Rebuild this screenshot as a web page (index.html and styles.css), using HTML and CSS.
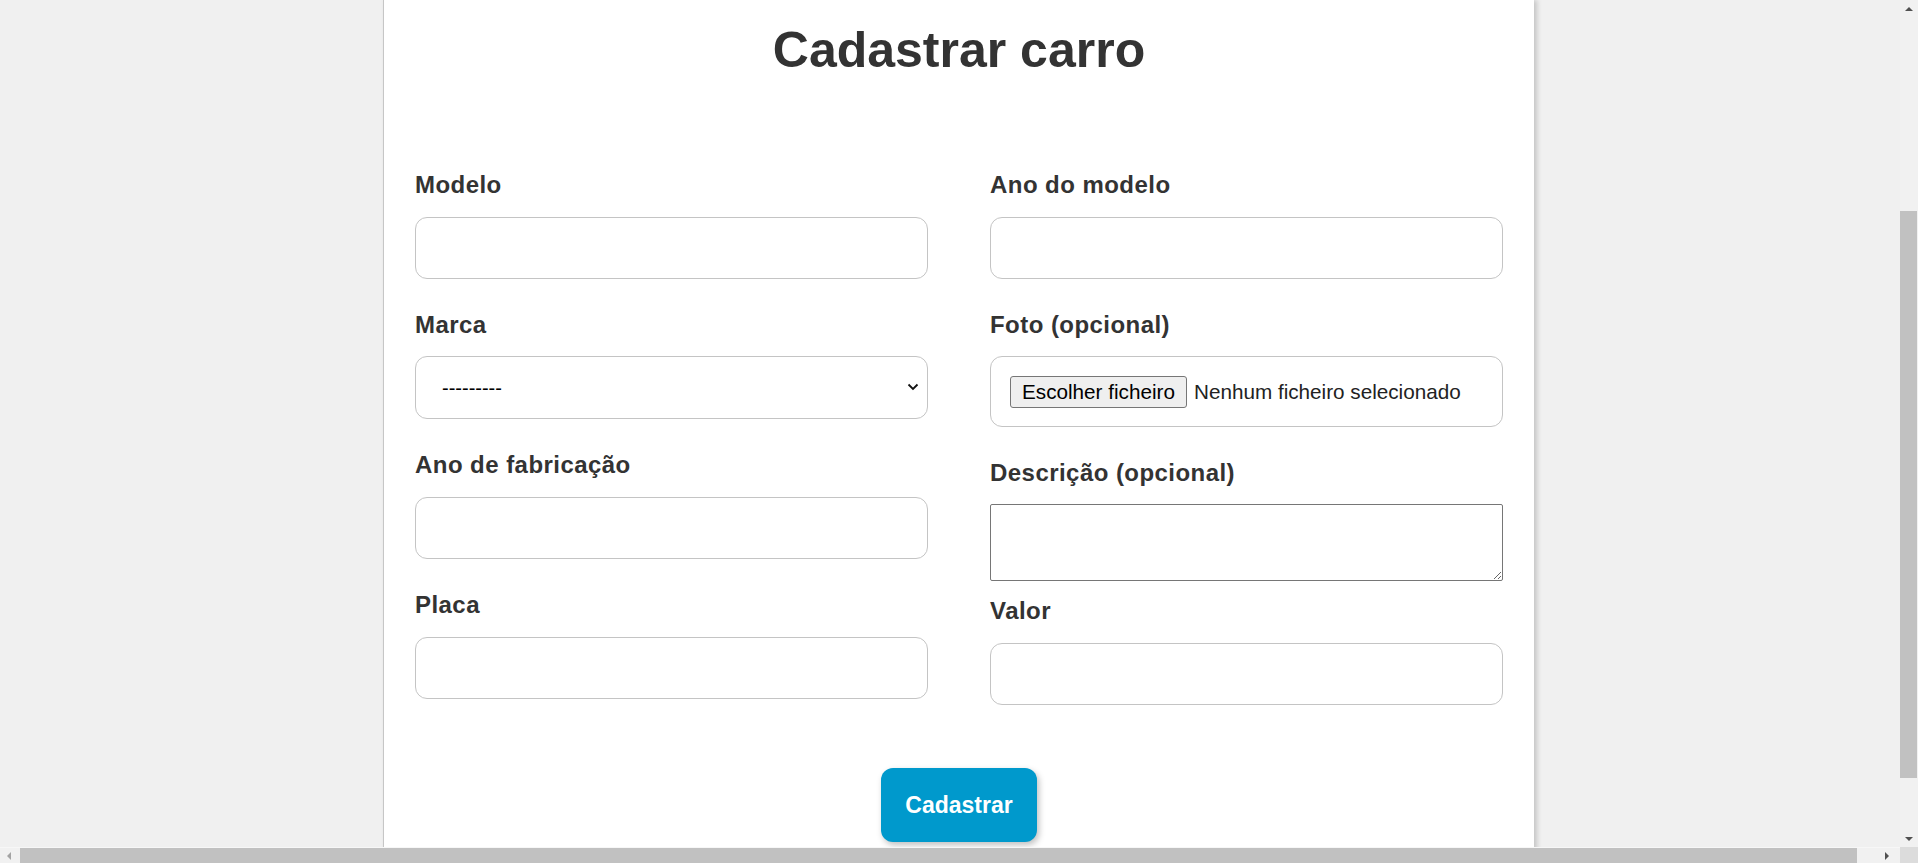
FILE: index.html
```html
<!DOCTYPE html>
<html lang="pt">
<head>
<meta charset="utf-8">
<title>Cadastrar carro</title>
<link rel="stylesheet" href="styles.css">
</head>
<body>
<div class="viewport">
  <main class="card">
    <h1 class="title">Cadastrar carro</h1>
    <form class="form">
      <div class="columns">
        <div class="col">
          <div class="field">
            <label class="label" for="modelo">Modelo</label>
            <input class="input" id="modelo" type="text">
          </div>
          <div class="field">
            <label class="label" for="marca">Marca</label>
            <div class="select-wrap">
              <select class="input select" id="marca">
                <option>---------</option>
              </select>
              <svg class="chevron" width="12" height="8" viewBox="0 0 12 8"><path d="M1.5 1.5 L6 6 L10.5 1.5" fill="none" stroke="#111" stroke-width="1.8"/></svg>
            </div>
          </div>
          <div class="field">
            <label class="label" for="anofab">Ano de fabricação</label>
            <input class="input" id="anofab" type="text">
          </div>
          <div class="field">
            <label class="label" for="placa">Placa</label>
            <input class="input" id="placa" type="text">
          </div>
        </div>
        <div class="col">
          <div class="field">
            <label class="label" for="anomod">Ano do modelo</label>
            <input class="input" id="anomod" type="text">
          </div>
          <div class="field">
            <span class="label">Foto (opcional)</span>
            <div class="file-box">
              <span class="file-btn">Escolher ficheiro</span>
              <span class="file-name">Nenhum ficheiro selecionado</span>
            </div>
          </div>
          <div class="field field-tight">
            <label class="label" for="desc">Descrição (opcional)</label>
            <textarea class="textarea" id="desc"></textarea>
          </div>
          <div class="field">
            <label class="label" for="valor">Valor</label>
            <input class="input" id="valor" type="text">
          </div>
        </div>
      </div>
      <div class="actions">
        <button class="submit" type="button">Cadastrar</button>
      </div>
    </form>
  </main>
</div>
<div class="vscroll">
  <div class="sb-btn"><span class="arrow-up"></span></div>
  <div class="vtrack"><div class="vthumb"></div></div>
  <div class="sb-btn"><span class="arrow-down"></span></div>
</div>
<div class="hscroll">
  <div class="sb-hbtn"><span class="arrow-left"></span></div>
  <div class="htrack"><div class="hthumb"></div></div>
  <div class="sb-hbtn sb-hbtn-right"><span class="arrow-right"></span></div>
</div>
<div class="corner"></div>
</body>
</html>
```

FILE: styles.css
```css
* { box-sizing: border-box; }

html, body {
  margin: 0;
  height: 100%;
}

body {
  display: grid;
  grid-template-columns: 1fr 18px;
  grid-template-rows: 1fr 16px;
  height: 863px;
  overflow: hidden;
  font-family: "Liberation Sans", Arial, Helvetica, sans-serif;
  color: #333;
  background: #f0f0f0;
}

.viewport {
  overflow: hidden;
  background: #f0f0f0;
}

.card {
  width: 1151px;
  min-height: 940px;
  margin-left: 383px;
  background: #fff;
  border-left: 1px solid #c6c6c6;
  box-shadow: 3px 0 5px rgba(0, 0, 0, 0.18);
  padding: 21px 31px 0 31px;
}

.title {
  margin: 0;
  text-align: center;
  font-size: 50px;
  line-height: 58px;
  font-weight: 700;
  color: #333;
}

.form {
  margin-top: 92px;
}

.columns {
  display: grid;
  grid-template-columns: 513px 513px;
  column-gap: 62px;
  align-items: start;
}

.col {
  display: flex;
  flex-direction: column;
}

.field {
  display: flex;
  flex-direction: column;
  margin-bottom: 32px;
}

.field-tight {
  margin-bottom: 16px;
}

.label {
  display: block;
  font-size: 24px;
  line-height: 28px;
  font-weight: 700;
  letter-spacing: 0.45px;
  margin-bottom: 18px;
  color: #333;
}

.input {
  display: block;
  width: 100%;
  height: 62px;
  border: 1px solid #c4c4c4;
  border-radius: 12px;
  background: #fff;
  font-family: "Liberation Sans", Arial, sans-serif;
  font-size: 20px;
  color: #000;
  padding: 0 18px;
  outline: none;
}

.select-wrap {
  position: relative;
}

.select {
  appearance: none;
  -webkit-appearance: none;
  height: 63px;
  margin-top: -1px;
  padding: 0 40px 0 26px;
  color: #000;
}

.chevron {
  position: absolute;
  right: 9px;
  top: 26px;
  pointer-events: none;
}

.file-box {
  display: flex;
  align-items: center;
  height: 71px;
  margin-top: -1px;
  border: 1px solid #c4c4c4;
  border-radius: 12px;
  padding: 0 19px;
  gap: 7px;
  font-size: 20.7px;
}

.file-btn {
  display: flex;
  align-items: center;
  height: 32px;
  padding: 0 11px;
  background: #efefef;
  border: 1px solid #767676;
  border-radius: 3px;
  color: #000;
  white-space: nowrap;
}

.file-name {
  color: #222;
  white-space: nowrap;
}

.textarea {
  display: block;
  width: 100%;
  height: 77px;
  margin-top: -1px;
  border: 1px solid #767676;
  border-radius: 2px;
  font-family: "Liberation Sans", Arial, sans-serif;
  font-size: 16px;
  resize: both;
  outline: none;
}

.actions {
  display: flex;
  justify-content: center;
  margin-top: 31px;
}

.submit {
  width: 156px;
  height: 74px;
  border: none;
  border-radius: 12px;
  background: #0099cc;
  color: #fff;
  font-family: "Liberation Sans", Arial, sans-serif;
  font-size: 23px;
  font-weight: 700;
  box-shadow: 2px 3px 6px rgba(0, 0, 0, 0.25);
  cursor: pointer;
}

/* scrollbars */
.vscroll {
  display: flex;
  flex-direction: column;
  background: #f1f1f1;
}

.sb-btn {
  height: 17px;
  display: flex;
  align-items: center;
  justify-content: center;
}

.vtrack {
  flex: 1;
}

.vthumb {
  margin-top: 194px;
  height: 567px;
  width: 17px;
  background: #c1c1c1;
}

.arrow-up {
  width: 0;
  height: 0;
  border-left: 4px solid transparent;
  border-right: 4px solid transparent;
  border-bottom: 4px solid #505050;
}

.arrow-down {
  width: 0;
  height: 0;
  border-left: 4px solid transparent;
  border-right: 4px solid transparent;
  border-top: 4px solid #505050;
}

.hscroll {
  display: flex;
  background: #f1f1f1;
  border-top: 1px solid #f7f7f7;
}

.sb-hbtn {
  width: 17px;
  display: flex;
  align-items: center;
  justify-content: center;
}

.sb-hbtn-right {
  width: 21px;
  justify-content: flex-start;
  padding-left: 6px;
}

.htrack {
  flex: 1;
}

.hthumb {
  margin-left: 3px;
  width: 1837px;
  height: 100%;
  background: #c1c1c1;
}

.arrow-left {
  width: 0;
  height: 0;
  border-top: 4px solid transparent;
  border-bottom: 4px solid transparent;
  border-right: 4px solid #a3a3a3;
}

.arrow-right {
  width: 0;
  height: 0;
  border-top: 4px solid transparent;
  border-bottom: 4px solid transparent;
  border-left: 4px solid #505050;
}

.corner {
  background: #dcdcdc;
}
```
